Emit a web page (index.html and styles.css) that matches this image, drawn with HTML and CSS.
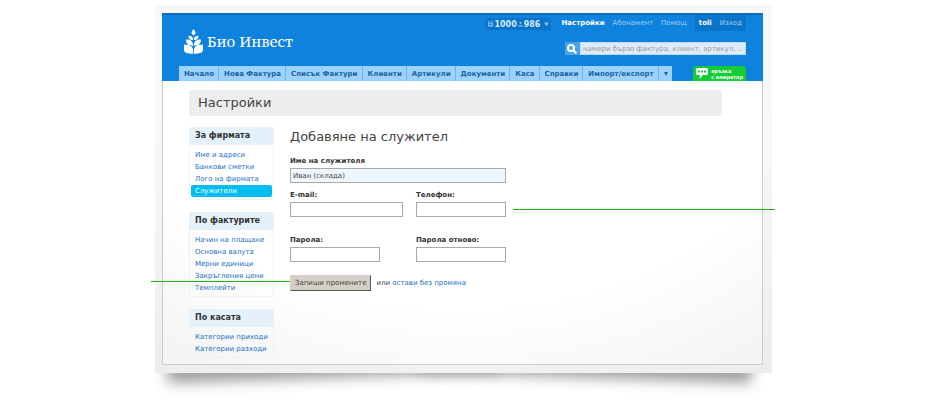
FILE: index.html
```html
<!DOCTYPE html>
<html lang="bg">
<head>
  <meta charset="UTF-8">
  <title>Настройки - Био Инвест</title>
  <meta name="viewport" content="width=device-width, initial-scale=1.0">
  <link rel="stylesheet" href="styles.css">
</head>
<body>
  <div class="stage">
    <div class="frame">
      <div class="app">
        <header class="header">
          <div class="header-top">
            <a class="brand" href="#">
              <svg class="brand-logo" viewBox="0 0 20 26" aria-hidden="true">
                <path d="M10 0c3 3 2.500 5 0 6.500c-2.500-1.500-3-3.500 0-6.500z"/>
                <path d="M9.600 11.500c-3 0-4.800-1-4.800-4.500c3 0 4.800 1 4.800 4.500zM10.400 11.500c3 0 4.800-1 4.800-4.500c-3 0-4.800 1-4.800 4.500z"/>
                <path d="M9.600 17.500c-5 0-7.400-1.500-7.400-6.500c5 0 7.400 2 7.400 6.500zM10.400 17.500c5 0 7.400-1.500 7.400-6.500c-5 0-7.400 2-7.400 6.500z"/>
                <path d="M9.600 26C4 26 0 25 0 22v-5.500c7 0 9.600 2 9.600 6zM10.400 26C16 26 20 25 20 22v-5.500c-7 0-9.600 2-9.600 6z"/>
              </svg>
              <span>Био Инвест</span>
            </a>
            <div class="header-tools">
              <nav class="user-nav">
                <button class="stats" type="button">
                  <svg class="stat-icon" viewBox="0 0 6 6" aria-hidden="true"><path d="M0 0h6v6H0zM1 1v1h4V1zM1 3v1h4V3z" fill-rule="evenodd"/></svg>1000
                  <svg class="stat-icon" viewBox="0 0 6 6" aria-hidden="true"><path d="M3 0l1.500 1.500L3 3.500L1.500 1.500zM0 4.500h6V6H0z"/></svg>986
                  <svg class="stat-arrow" viewBox="0 0 6 5" aria-hidden="true"><path d="M0 0h6L3 5z"/></svg>
                </button>
                <a class="current" href="#">Настройки</a>
                <a href="#">Абонамент</a>
                <a href="#">Помощ</a>
                <span class="account"><a class="current" href="#">toli</a><a href="#">Изход</a></span>
              </nav>
              <form class="search">
                <button type="submit" aria-label="Търси">
                  <svg viewBox="0 0 10 10" aria-hidden="true"><circle cx="4" cy="4" r="3"/><path d="M6.300 6.300L9.300 9.300"/></svg>
                </button>
                <input type="text" aria-label="Търсене" placeholder="намери бързо фактура, клиент, артикул, .....">
              </form>
            </div>
          </div>
          <div class="header-bottom">
            <nav class="tabs">
              <a href="#">Начало</a>
              <a href="#">Нова Фактура</a>
              <a href="#">Списък Фактури</a>
              <a href="#">Клиенти</a>
              <a href="#">Артикули</a>
              <a href="#">Документи</a>
              <a href="#">Каса</a>
              <a href="#">Справки</a>
              <a href="#">Импорт/експорт</a>
              <a href="#" aria-label="Още"><svg viewBox="0 0 4 4" aria-hidden="true"><path d="M0 0h4L2 4z"/></svg></a>
            </nav>
            <a class="chat" href="#">
              <svg viewBox="0 0 12 11" aria-hidden="true"><path d="M1.500 0h9q1.500 0 1.500 1.500v4q0 1.500-1.500 1.500H7L3.500 11L4 7H1.500Q0 7 0 5.500v-4Q0 0 1.500 0z" fill="#fff"/><path d="M2 3.500h2M5 3.500h2M8 3.500h2" stroke="#14cc35" stroke-width="2"/></svg>
              <span>връзка<br>с оператор</span>
            </a>
          </div>
        </header>

        <main class="content">
          <h1>Настройки</h1>
          <div class="columns">
            <aside class="sidebar">
              <section class="box">
                <h3>За фирмата</h3>
                <ul>
                  <li><a href="#">Име и адреси</a></li>
                  <li><a href="#">Банкови сметки</a></li>
                  <li><a href="#">Лого на фирмата</a></li>
                  <li><a class="active" href="#">Служители</a></li>
                </ul>
              </section>
              <section class="box">
                <h3>По фактурите</h3>
                <ul>
                  <li><a href="#">Начин на плащане</a></li>
                  <li><a href="#">Основна валута</a></li>
                  <li><a href="#">Мерни единици</a></li>
                  <li><a href="#">Закръгления цени</a></li>
                  <li><a href="#">Темплейти</a></li>
                </ul>
              </section>
              <section class="box">
                <h3>По касата</h3>
                <ul>
                  <li><a href="#">Категории приходи</a></li>
                  <li><a href="#">Категории разходи</a></li>
                </ul>
              </section>
            </aside>

            <form class="employee">
              <h2>Добавяне на служител</h2>
              <div class="fields">
                <div class="field wide">
                  <label for="name">Име на служителя</label>
                  <input type="text" id="name" class="focused" value="Иван (склада)">
                </div>
                <div class="field">
                  <label for="email">E-mail:</label>
                  <input type="text" id="email">
                </div>
                <div class="field">
                  <label for="phone">Телефон:</label>
                  <input type="text" id="phone">
                </div>
                <div class="field password">
                  <label for="pass">Парола:</label>
                  <input type="password" id="pass" class="short">
                </div>
                <div class="field password">
                  <label for="pass2">Парола отново:</label>
                  <input type="password" id="pass2">
                </div>
              </div>
              <div class="actions">
                <button type="submit">Запиши промените</button>
                <span>или <a href="#">остави без промяна</a></span>
              </div>
            </form>
          </div>
        </main>
      </div>
    </div>
    <!-- callout lines -->
    <div class="callout callout-left"></div>
    <div class="callout callout-right"></div>
  </div>
</body>
</html>
```

FILE: styles.css
```css
body {
  margin: 0;
  padding: 5px 168px 36px 155px;
  background: #fff;
  color: #444;
  font-family: "DejaVu Sans", Verdana, sans-serif;
  font-size: 7px;
  line-height: 12px;
}
a {
  color: #1b6fc8;
  text-decoration: none;
}
h1, h2, h3, ul {
  margin: 0;
  padding: 0;
  font-weight: normal;
}
button, input {
  box-sizing: border-box;
  font-family: inherit;
  font-size: 7px;
  border-radius: 0;
}
.stage {
  position: relative;
  z-index: 0;
}
/* lifted corners: two tilted shadows under the sheet */
.stage::before,
.stage::after {
  content: "";
  position: absolute;
  z-index: -1;
  bottom: 10px;
  width: 54%;
  height: 20px;
  box-shadow: 0 14px 14px #999;
}
.stage::before {
  left: 12px;
  transform: rotate(-2deg);
}
.stage::after {
  right: 20px;
  transform: rotate(2deg);
}
.frame {
  padding: 8px 9px 8px 7px;
  background: radial-gradient(ellipse 90% 120% at 50% 0, #f8f8f8 60%, #ececec 100%);
}
.app {
  border: 1px solid #ccc;
  border-top: 0;
  background: radial-gradient(ellipse 90% 120% at 50% 0, #fff 70%, #f3f3f3 100%);
}

/* header */
.header {
  margin: 0 -1px;
  background: #0e82dd;
  border-top: 2px solid #0a6fc0;
}
.header-top {
  display: flex;
  justify-content: space-between;
  padding: 0 17px 0 22px;
}
.brand {
  display: flex;
  align-items: center;
  gap: 4px;
  margin-top: 13px;
  height: 26px;
  color: #fff;
  font-family: "Noto Serif", "DejaVu Serif", serif;
  font-size: 15px;
}
.brand-logo {
  width: 19px;
  height: 25px;
  fill: #fff;
}
.header-tools {
  display: flex;
  flex-direction: column;
  align-items: flex-end;
  gap: 11px;
}
.user-nav {
  display: flex;
  gap: 8px;
  line-height: 15px;
}
.user-nav a {
  color: #9ccff8;
}
.user-nav .current {
  color: #fff;
  font-weight: bold;
}
.stats {
  display: flex;
  align-items: center;
  gap: 1px;
  height: 12px;
  margin: 3px 2px 0 0;
  padding: 0 2px;
  border: 0;
  background: #0a74c9;
  color: #d5ebff;
  font-size: 8px;
  font-weight: bold;
}
.stats svg {
  fill: #7fbdf0;
}
.stat-icon {
  width: 5px;
  height: 6px;
}
.stat-arrow {
  width: 5px;
  height: 5px;
  margin-left: 3px;
}
.user-nav > a {
  padding-top: 1px;
}
.account {
  display: flex;
  gap: 8px;
  padding: 1px 4px 0;
  border-radius: 0 0 3px 3px;
  background: #0a74c9;
}
.search {
  display: flex;
  width: 181px;
  height: 13px;
}
.search button {
  width: 15px;
  padding: 2px;
  border: 0;
  background: #4ba3e8;
}
.search svg {
  display: block;
  width: 10px;
  height: 10px;
  fill: none;
  stroke: #fff;
  stroke-width: 2;
}
.search input {
  flex: 1;
  min-width: 0;
  padding: 0 2px;
  border: 1px solid #c0dcf5;
  background: #dcecfa;
}
.search input::placeholder {
  color: #999;
}
.header-bottom {
  display: flex;
  justify-content: space-between;
  margin-top: 11px;
  padding: 0 17px;
}
.tabs {
  display: flex;
  gap: 1px;
  height: 15px;
  background: #6cb5f2;
}
.tabs a {
  padding: 0 4px 0 5px;
  background: #9bd2ff;
  color: #1763a5;
  font-weight: bold;
  line-height: 16px;
}
.tabs svg {
  width: 4px;
  height: 4px;
  fill: #1763a5;
}
.chat {
  display: flex;
  align-items: center;
  gap: 3px;
  padding: 0 3px;
  border-radius: 3px 3px 0 0;
  background: #14cc35;
  color: #fff;
  font-size: 5px;
  font-weight: bold;
  line-height: 6px;
}
.chat svg {
  width: 12px;
  height: 11px;
}

/* content */
.content {
  padding: 9px 40px 6px 26px;
}
h1 {
  padding: 0 9px;
  border-radius: 3px;
  background: #ededed;
  font-size: 13px;
  line-height: 26px;
}
.columns {
  display: grid;
  grid-template-columns: 85px 1fr;
  gap: 16px;
  margin-top: 11px;
}
.sidebar {
  display: flex;
  flex-direction: column;
  gap: 12px;
}
.box {
  box-sizing: border-box;
  border: 1px solid #eaf4fa;
  border-top: 0;
  border-radius: 3px;
}
.box h3 {
  margin: 0 -1px;
  padding: 0 6px;
  border-radius: 3px 3px 0 0;
  background: #e4f1fa;
  color: #333;
  font-size: 8px;
  font-weight: bold;
  line-height: 18px;
}
.box ul {
  padding: 4px 1px 2px;
  list-style: none;
}
.box a {
  display: block;
  padding: 0 4px;
  white-space: nowrap;
}
.box .active {
  border-radius: 2px;
  background: #00bdf2;
  color: #fff;
}
.employee h2 {
  font-size: 13px;
  line-height: 20px;
}
.fields {
  display: grid;
  grid-template-columns: 113px 90px;
  column-gap: 13px;
  row-gap: 6px;
  margin-top: 8px;
}
.field {
  display: flex;
  flex-direction: column;
}
.wide {
  grid-column: 1 / -1;
}
.password {
  margin-top: 11px;
}
.field label {
  color: #333;
  font-weight: bold;
  line-height: 13px;
}
.field input {
  width: 100%;
  height: 15px;
  padding: 0 2px;
  border: 1px solid #aaa;
  background: #fff;
  color: #444;
}
.field .short {
  width: 90px;
}
.field .focused {
  background: #eef6fe;
}
.actions {
  display: flex;
  align-items: center;
  gap: 5px;
  margin-top: 13px;
}
.actions button {
  height: 16px;
  padding: 0 4px;
  border: 1px solid #d4d0c8;
  border-right-color: #555;
  border-bottom-color: #555;
  background: #d4d0c8;
  color: #444;
}

/* callouts lie over the sheet */
.callout {
  position: absolute;
  height: 1px;
  background: #1fb010;
}
.callout-left {
  top: 276px;
  left: -4px;
  width: 139px;
}
.callout-right {
  top: 204px;
  right: -3px;
  width: 262px;
}
```
